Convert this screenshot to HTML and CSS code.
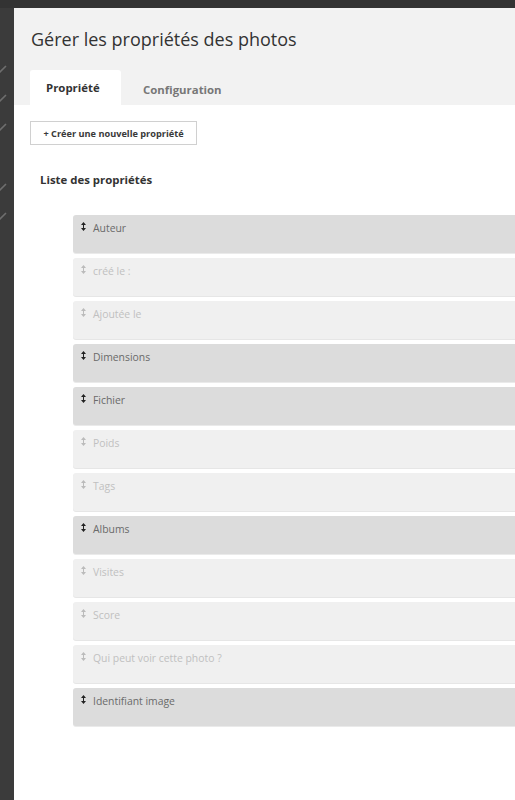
FILE: index.html
```html
<!DOCTYPE html>
<html lang="fr">
<head>
<meta charset="utf-8">
<link rel="stylesheet" href="styles.css">
</head>
<body>
<div class="topbar"></div>
<div class="layout">
  <aside class="sidebar">
    <svg class="chk" viewBox="0 0 14 12"><path d="M-3 7 L0 9 L6 3"/></svg>
    <svg class="chk" viewBox="0 0 14 12"><path d="M-3 7 L0 9 L6 3"/></svg>
    <svg class="chk" viewBox="0 0 14 12"><path d="M-3 7 L0 9 L6 3"/></svg>
    <svg class="chk gap" viewBox="0 0 14 12"><path d="M-3 7 L0 9 L6 3"/></svg>
    <svg class="chk" viewBox="0 0 14 12"><path d="M-3 7 L0 9 L6 3"/></svg>
  </aside>
  <main class="main">
    <header class="header">
      <h1 class="title">Gérer les propriétés des photos</h1>
      <nav class="tabs">
        <span class="tab active">Propriété</span>
        <span class="tab">Configuration</span>
      </nav>
    </header>
    <section class="content">
      <button class="btn">+ Créer une nouvelle propriété</button>
      <h2 class="subtitle">Liste des propriétés</h2>
      <ul class="list">
        <li class="item on"><svg class="ic" viewBox="0 0 5 9"><path d="M2.5 0 L5 3 H0 Z M2 2.5 H3 V6.5 H2 Z M0 6 H5 L2.5 9 Z"/></svg>Auteur</li>
        <li class="item"><svg class="ic" viewBox="0 0 5 9"><path d="M2.5 0 L5 3 H0 Z M2 2.5 H3 V6.5 H2 Z M0 6 H5 L2.5 9 Z"/></svg>créé le :</li>
        <li class="item"><svg class="ic" viewBox="0 0 5 9"><path d="M2.5 0 L5 3 H0 Z M2 2.5 H3 V6.5 H2 Z M0 6 H5 L2.5 9 Z"/></svg>Ajoutée le</li>
        <li class="item on"><svg class="ic" viewBox="0 0 5 9"><path d="M2.5 0 L5 3 H0 Z M2 2.5 H3 V6.5 H2 Z M0 6 H5 L2.5 9 Z"/></svg>Dimensions</li>
        <li class="item on"><svg class="ic" viewBox="0 0 5 9"><path d="M2.5 0 L5 3 H0 Z M2 2.5 H3 V6.5 H2 Z M0 6 H5 L2.5 9 Z"/></svg>Fichier</li>
        <li class="item"><svg class="ic" viewBox="0 0 5 9"><path d="M2.5 0 L5 3 H0 Z M2 2.5 H3 V6.5 H2 Z M0 6 H5 L2.5 9 Z"/></svg>Poids</li>
        <li class="item"><svg class="ic" viewBox="0 0 5 9"><path d="M2.5 0 L5 3 H0 Z M2 2.5 H3 V6.5 H2 Z M0 6 H5 L2.5 9 Z"/></svg>Tags</li>
        <li class="item on"><svg class="ic" viewBox="0 0 5 9"><path d="M2.5 0 L5 3 H0 Z M2 2.5 H3 V6.5 H2 Z M0 6 H5 L2.5 9 Z"/></svg>Albums</li>
        <li class="item"><svg class="ic" viewBox="0 0 5 9"><path d="M2.5 0 L5 3 H0 Z M2 2.5 H3 V6.5 H2 Z M0 6 H5 L2.5 9 Z"/></svg>Visites</li>
        <li class="item"><svg class="ic" viewBox="0 0 5 9"><path d="M2.5 0 L5 3 H0 Z M2 2.5 H3 V6.5 H2 Z M0 6 H5 L2.5 9 Z"/></svg>Score</li>
        <li class="item"><svg class="ic" viewBox="0 0 5 9"><path d="M2.5 0 L5 3 H0 Z M2 2.5 H3 V6.5 H2 Z M0 6 H5 L2.5 9 Z"/></svg>Qui peut voir cette photo ?</li>
        <li class="item on"><svg class="ic" viewBox="0 0 5 9"><path d="M2.5 0 L5 3 H0 Z M2 2.5 H3 V6.5 H2 Z M0 6 H5 L2.5 9 Z"/></svg>Identifiant image</li>
      </ul>
    </section>
  </main>
</div>
</body>
</html>
```
FILE: styles.css
```css
* { box-sizing: border-box; }
html, body { margin: 0; padding: 0; }
body {
  font-family: "Open Sans", "Liberation Sans", sans-serif;
  background: #fff;
  width: 515px;
  height: 800px;
  overflow: hidden;
}
.topbar { height: 8px; background: #333333; }
.layout { display: flex; height: 792px; }
.sidebar {
  width: 14px;
  flex: none;
  background: #3b3b3b;
  display: flex;
  flex-direction: column;
  padding-top: 55px;
  overflow: hidden;
}
.chk {
  width: 14px;
  height: 12px;
  margin-bottom: 17px;
  flex: none;
  fill: none;
  stroke: #6e6e6e;
  stroke-width: 1.6;
}
.chk.gap { margin-top: 31px; }
.main { flex: 1; min-width: 0; }
.header {
  background: #f2f2f2;
  padding: 19px 0 0 17px;
  height: 97px;
  display: flex;
  flex-direction: column;
}
.title {
  margin: 0;
  font-size: 18px;
  font-weight: 400;
  color: #333;
  line-height: 25px;
}
.tabs { display: flex; margin-top: 18px; }
.tab {
  height: 35px;
  padding: 0 22px;
  font-size: 11.4px;
  font-weight: 700;
  color: #777;
  line-height: 40px;
}
.tab.active {
  background: #fff;
  color: #333;
  width: 91px;
  padding: 0 0 0 16px;
  margin-left: -1px;
  border-radius: 3px 3px 0 0;
  line-height: 36px;
}
.content { padding: 16px 0 0 16px; }
.btn {
  display: block;
  width: 167px;
  height: 24px;
  background: #fff;
  border: 1px solid #d0d0d0;
  font-family: inherit;
  font-size: 9.2px;
  font-weight: 700;
  color: #3a3a3a;
  padding: 0;
  text-align: center;
  margin: 0;
}
.subtitle {
  margin: 26px 0 0 10px;
  font-size: 11.4px;
  font-weight: 700;
  color: #333;
  line-height: 18px;
}
.list {
  list-style: none;
  margin: 26px 0 0 43px;
  padding: 0;
  display: flex;
  flex-direction: column;
  gap: 5px;
}
.item {
  height: 38px;
  background: #f0f0f0;
  border-radius: 3px 0 0 3px;
  color: #c0c0c0;
  font-size: 10.4px;
  line-height: 14px;
  padding: 6px 0 0 7px;
  display: flex;
  align-items: flex-start;
  box-shadow: 0 1px 0 #e6e6e6;
}
.item.on { background: #dcdcdc; color: #6a6a6a; box-shadow: 0 1px 0 #eaeaea; }
.ic {
  width: 5px;
  height: 9px;
  margin: 1px 7px 0 1px;
  flex: none;
  fill: #bbb;
}
.item.on .ic { fill: #222; }
```
